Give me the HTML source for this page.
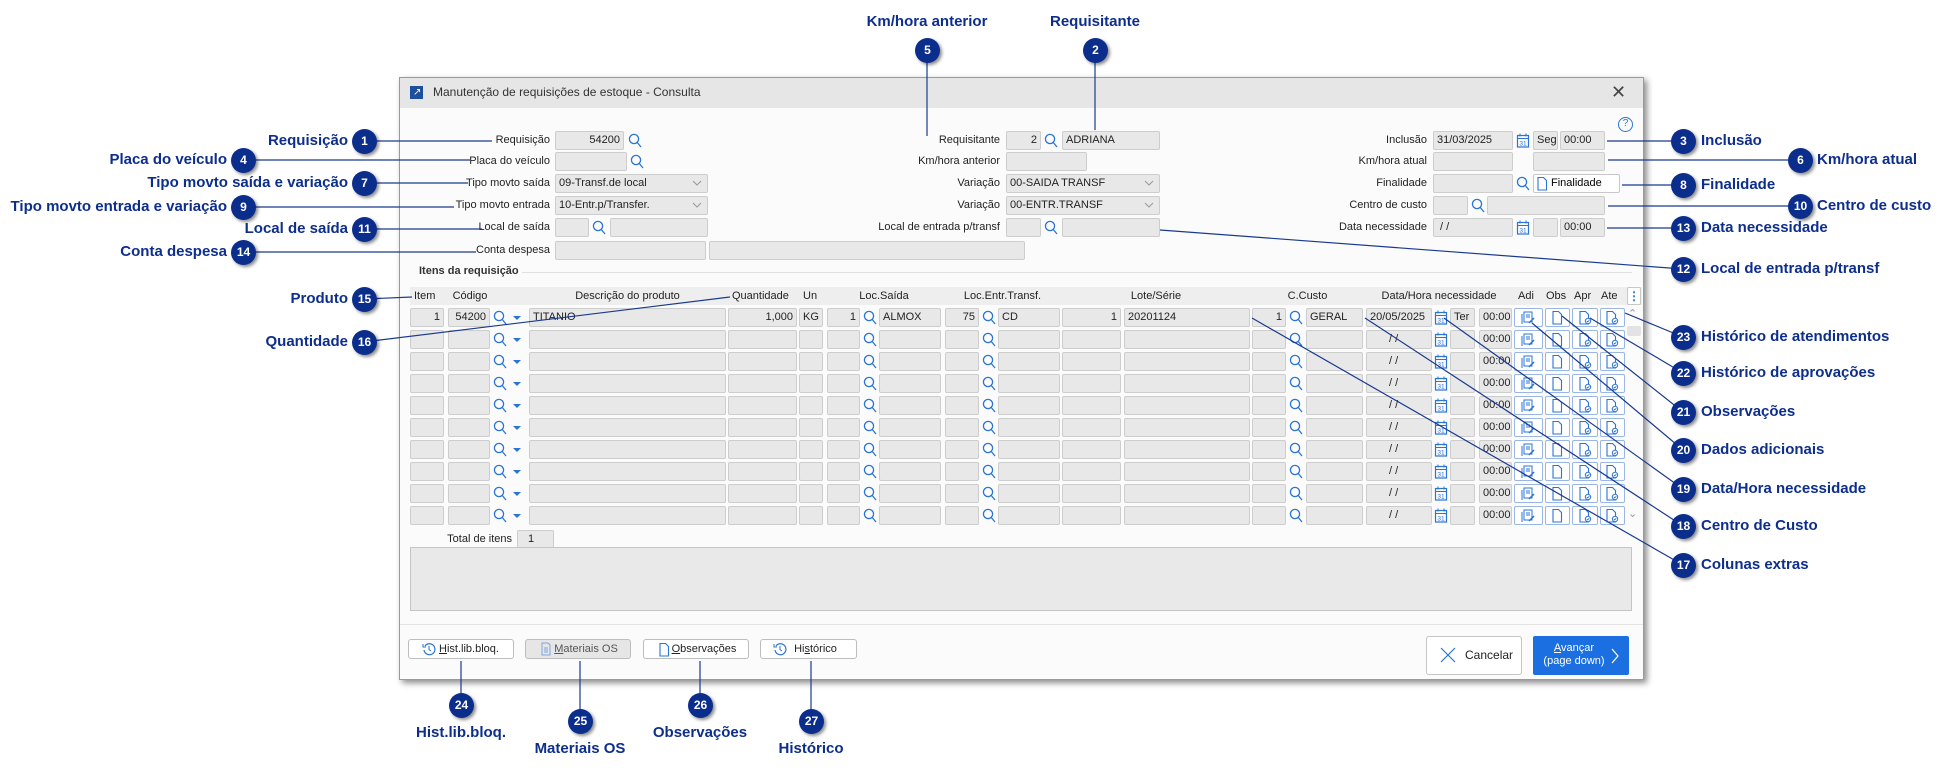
<!DOCTYPE html>
<html><head><meta charset="utf-8">
<style>
*{box-sizing:border-box}
body{margin:0;width:1945px;height:772px;position:relative;background:#fff;font-family:"Liberation Sans",sans-serif;overflow:hidden}
.a{position:absolute}
.win{left:399px;top:77px;width:1245px;height:603px;background:#fbfbfb;border:1px solid #9a9a9a;box-shadow:3px 3px 6px rgba(0,0,0,.45)}
.tb{left:400px;top:78px;width:1243px;height:30px;background:#e6e6e6}
.f{position:absolute;height:19px;background:#e8e8e8;border:1px solid #cdcdcd;border-radius:2px;font-size:11px;line-height:17px;padding:0 3px;color:#222;white-space:nowrap;overflow:hidden}
.r{text-align:right}
.lb{position:absolute;font-size:11px;color:#222;text-align:right;white-space:nowrap;line-height:19px}
.hd{position:absolute;top:288px;font-size:11px;color:#222;line-height:16px;white-space:nowrap}
.row{position:absolute;left:0;width:1945px;height:19px}
.row .f{top:0}
.ic{position:absolute;top:2px;width:14px;height:15px}
.bt{position:absolute;height:19px;background:#fff;border:1px solid #9ab6e4;border-radius:2px}
.bd{position:absolute;width:25px;height:25px;margin:-12px 0 0 -12px;border-radius:50%;background:#0b2d8c;color:#fff;font:bold 12px/25px "Liberation Sans",sans-serif;text-align:center;box-shadow:2px 2px 3px rgba(0,0,0,.45)}
.bl{position:absolute;font:bold 15px/18px "Liberation Sans",sans-serif;color:#0d2e8c;white-space:nowrap}
.btn{position:absolute;top:639px;height:20px;background:#fff;border:1px solid #bdbdbd;border-radius:3px;font-size:11px;line-height:18px;text-align:center;color:#222}
</style></head><body>
<svg width="0" height="0" style="position:absolute"><defs>
<symbol id="lp" viewBox="0 0 14 15"><circle cx="6" cy="6" r="4.6" fill="none" stroke="#2a74d8" stroke-width="1.3"/><line x1="9.3" y1="9.5" x2="13" y2="14" stroke="#2a74d8" stroke-width="1.3"/></symbol>
<symbol id="cl" viewBox="0 0 14 15"><rect x="1.5" y="2.5" width="11" height="11.5" fill="none" stroke="#2a74d8" stroke-width="1.2"/><line x1="1.5" y1="5.5" x2="12.5" y2="5.5" stroke="#2a74d8"/><line x1="4" y1="0.5" x2="4" y2="3.5" stroke="#2a74d8"/><line x1="10" y1="0.5" x2="10" y2="3.5" stroke="#2a74d8"/><text x="7" y="12.6" font-size="6.5" font-family="Liberation Sans" text-anchor="middle" fill="#2a74d8">31</text></symbol>
<symbol id="dc" viewBox="0 0 14 15"><path d="M3 1.5h5.5l3 3v9.5h-8.5z" fill="none" stroke="#2a74d8" stroke-width="1.1"/></symbol>
<symbol id="dk" viewBox="0 0 14 15"><path d="M2 1.5h5.5l3 3v9.5h-8.5z" fill="none" stroke="#2a74d8" stroke-width="1.1"/><circle cx="10" cy="11" r="2.7" fill="#fff" stroke="#2a74d8"/><path d="M8.8 11l0.9 0.9 1.6-1.6" fill="none" stroke="#2a74d8" stroke-width=".9"/></symbol>
<symbol id="ad" viewBox="0 0 14 15"><rect x="3" y="2" width="8" height="10" fill="none" stroke="#2a74d8"/><line x1="1" y1="4" x2="1" y2="14" stroke="#2a74d8"/><line x1="5" y1="5" x2="9" y2="5" stroke="#2a74d8"/><line x1="5" y1="7" x2="9" y2="7" stroke="#2a74d8"/><path d="M8 13l5-5" stroke="#2a74d8" stroke-width="1.5"/></symbol>
<symbol id="ar" viewBox="0 0 14 15"><path d="M3 6h8l-4 4z" fill="#2a74d8"/></symbol>
<symbol id="cb" viewBox="0 0 14 15"><path d="M3 5l4 4 4-4" fill="none" stroke="#999" stroke-width="1"/></symbol>
</defs></svg>

<div class="a win"></div>
<div class="a tb"></div>
<div class="a" style="left:410px;top:86px;width:13px;height:13px;background:#1d4f9e"></div>
<div class="a" style="left:413px;top:88px;color:#fff;font-size:10px;line-height:10px">&#8599;</div>
<div class="a" style="left:433px;top:85px;font-size:12px;color:#333">Manutenção de requisições de estoque - Consulta</div>
<div class="a" style="left:1611px;top:82px;font-size:18px;color:#444">&#x2715;</div>
<div class="a" style="left:1618px;top:117px;width:15px;height:15px;border:1.3px solid #2a74d8;border-radius:50%;color:#2a74d8;font-size:10px;line-height:12px;text-align:center">?</div>

<!-- left column -->
<div class="lb" style="left:400px;width:150px;top:131px">Requisição</div>
<div class="f r" style="left:555px;top:131px;width:69px">54200</div><svg class="ic" style="left:628px;top:133px"><use href="#lp"/></svg>
<div class="lb" style="left:400px;width:150px;top:152px">Placa do veículo</div>
<div class="f" style="left:555px;top:152px;width:72px"></div><svg class="ic" style="left:630px;top:154px"><use href="#lp"/></svg>
<div class="lb" style="left:400px;width:150px;top:174px">Tipo movto saída</div>
<div class="f" style="left:555px;top:174px;width:153px">09-Transf.de local</div><svg class="ic" style="left:690px;top:176px"><use href="#cb"/></svg>
<div class="lb" style="left:400px;width:150px;top:196px">Tipo movto entrada</div>
<div class="f" style="left:555px;top:196px;width:153px">10-Entr.p/Transfer.</div><svg class="ic" style="left:690px;top:198px"><use href="#cb"/></svg>
<div class="lb" style="left:400px;width:150px;top:218px">Local de saída</div>
<div class="f" style="left:555px;top:218px;width:34px"></div><svg class="ic" style="left:592px;top:220px"><use href="#lp"/></svg><div class="f" style="left:610px;top:218px;width:98px"></div>
<div class="lb" style="left:400px;width:150px;top:241px">Conta despesa</div>
<div class="f" style="left:555px;top:241px;width:151px"></div><div class="f" style="left:709px;top:241px;width:316px"></div>

<!-- middle column -->
<div class="lb" style="left:850px;width:150px;top:131px">Requisitante</div>
<div class="f r" style="left:1006px;top:131px;width:35px">2</div><svg class="ic" style="left:1044px;top:133px"><use href="#lp"/></svg><div class="f" style="left:1062px;top:131px;width:98px">ADRIANA</div>
<div class="lb" style="left:850px;width:150px;top:152px">Km/hora anterior</div>
<div class="f" style="left:1006px;top:152px;width:81px"></div>
<div class="lb" style="left:850px;width:150px;top:174px">Variação</div>
<div class="f" style="left:1006px;top:174px;width:154px">00-SAIDA TRANSF</div><svg class="ic" style="left:1142px;top:176px"><use href="#cb"/></svg>
<div class="lb" style="left:850px;width:150px;top:196px">Variação</div>
<div class="f" style="left:1006px;top:196px;width:154px">00-ENTR.TRANSF</div><svg class="ic" style="left:1142px;top:198px"><use href="#cb"/></svg>
<div class="lb" style="left:850px;width:150px;top:218px">Local de entrada p/transf</div>
<div class="f" style="left:1006px;top:218px;width:35px"></div><svg class="ic" style="left:1044px;top:220px"><use href="#lp"/></svg><div class="f" style="left:1062px;top:218px;width:98px"></div>

<!-- right column -->
<div class="lb" style="left:1277px;width:150px;top:131px">Inclusão</div>
<div class="f" style="left:1433px;top:131px;width:80px">31/03/2025</div><svg class="ic" style="left:1516px;top:133px"><use href="#cl"/></svg><div class="f" style="left:1533px;top:131px;width:25px">Seg</div><div class="f" style="left:1560px;top:131px;width:45px">00:00</div>
<div class="lb" style="left:1277px;width:150px;top:152px">Km/hora atual</div>
<div class="f" style="left:1433px;top:152px;width:80px"></div><div class="f" style="left:1533px;top:152px;width:72px"></div>
<div class="lb" style="left:1277px;width:150px;top:174px">Finalidade</div>
<div class="f" style="left:1433px;top:174px;width:80px"></div><svg class="ic" style="left:1516px;top:176px"><use href="#lp"/></svg>
<div class="a" style="left:1533px;top:174px;width:87px;height:19px;background:#fff;border:1px solid #c8c8c8;border-radius:2px;font-size:11px;line-height:17px;padding-left:17px">Finalidade</div><svg class="ic" style="left:1535px;top:176px"><use href="#dc"/></svg>
<div class="lb" style="left:1277px;width:150px;top:196px">Centro de custo</div>
<div class="f" style="left:1433px;top:196px;width:35px"></div><svg class="ic" style="left:1471px;top:198px"><use href="#lp"/></svg><div class="f" style="left:1487px;top:196px;width:118px"></div>
<div class="lb" style="left:1277px;width:150px;top:218px">Data necessidade</div>
<div class="f" style="left:1433px;top:218px;width:80px">&nbsp;/ /</div><svg class="ic" style="left:1516px;top:220px"><use href="#cl"/></svg><div class="f" style="left:1533px;top:218px;width:25px"></div><div class="f" style="left:1560px;top:218px;width:45px">00:00</div>

<!-- items -->
<div class="a" style="left:419px;top:265px;font-size:11px;font-weight:bold;color:#333">Itens da requisição</div>
<div class="a" style="left:522px;top:272px;width:1110px;height:1px;background:#e0e0e0"></div>
<div class="a" style="left:410px;top:287px;width:1232px;height:18px;background:#eeeeee"></div>
<div class="hd" style="left:414px">Item</div>
<div class="hd" style="left:452px;width:36px;text-align:center">Código</div>
<div class="hd" style="left:529px;width:197px;text-align:center">Descrição do produto</div>
<div class="hd" style="left:732px">Quantidade</div>
<div class="hd" style="left:803px">Un</div>
<div class="hd" style="left:827px;width:114px;text-align:center">Loc.Saída</div>
<div class="hd" style="left:945px;width:115px;text-align:center">Loc.Entr.Transf.</div>
<div class="hd" style="left:1062px;width:188px;text-align:center">Lote/Série</div>
<div class="hd" style="left:1252px;width:111px;text-align:center">C.Custo</div>
<div class="hd" style="left:1366px;width:146px;text-align:center">Data/Hora necessidade</div>
<div class="hd" style="left:1518px">Adi</div>
<div class="hd" style="left:1546px">Obs</div>
<div class="hd" style="left:1574px">Apr</div>
<div class="hd" style="left:1601px">Ate</div>
<div class="a" style="left:1627px;top:287px;width:14px;height:18px;background:#fff;border:1px solid #c8c8c8;border-radius:2px;color:#2a74d8;font-size:12px;font-weight:bold;text-align:center;line-height:16px">&#8942;</div>
<div class="a" style="left:1628px;top:307px;font-size:11px;color:#999">&#8963;</div>
<div class="a" style="left:1627px;top:326px;width:14px;height:10px;background:#e3e3e3;border-radius:2px"></div>
<div class="a" style="left:1628px;top:507px;font-size:11px;color:#999">&#8964;</div>

<div class="row" style="top:308px">
<div class="f r" style="left:410px;width:34px">1</div><div class="f r" style="left:448px;width:42px">54200</div><svg class="ic" style="left:493px"><use href="#lp"/></svg><svg class="ic" style="left:510px"><use href="#ar"/></svg>
<div class="f" style="left:529px;width:197px">TITANIO</div><div class="f r" style="left:728px;width:69px">1,000</div><div class="f" style="left:799px;width:24px">KG</div>
<div class="f r" style="left:827px;width:33px">1</div><svg class="ic" style="left:863px"><use href="#lp"/></svg><div class="f" style="left:879px;width:62px">ALMOX</div>
<div class="f r" style="left:945px;width:34px">75</div><svg class="ic" style="left:982px"><use href="#lp"/></svg><div class="f" style="left:998px;width:62px">CD</div>
<div class="f r" style="left:1062px;width:59px">1</div><div class="f" style="left:1124px;width:126px">20201124</div>
<div class="f r" style="left:1252px;width:34px">1</div><svg class="ic" style="left:1289px"><use href="#lp"/></svg><div class="f" style="left:1306px;width:57px">GERAL</div>
<div class="f" style="left:1366px;width:66px">20/05/2025</div><svg class="ic" style="left:1434px"><use href="#cl"/></svg><div class="f" style="left:1450px;width:25px">Ter</div><div class="f" style="left:1479px;width:33px">00:00</div>
<div class="bt" style="left:1514px;width:29px"></div><svg class="ic" style="left:1521px"><use href="#ad"/></svg>
<div class="bt" style="left:1545px;width:25px"></div><svg class="ic" style="left:1550px"><use href="#dc"/></svg>
<div class="bt" style="left:1572px;width:26px"></div><svg class="ic" style="left:1578px"><use href="#dk"/></svg>
<div class="bt" style="left:1600px;width:25px"></div><svg class="ic" style="left:1605px"><use href="#dk"/></svg>
</div>

<div class="row" style="top:330px"><div class="f" style="left:410px;width:34px"></div><div class="f" style="left:448px;width:42px"></div><svg class="ic" style="left:493px"><use href="#lp"/></svg><svg class="ic" style="left:510px"><use href="#ar"/></svg><div class="f" style="left:529px;width:197px"></div><div class="f" style="left:728px;width:69px"></div><div class="f" style="left:799px;width:24px"></div><div class="f" style="left:827px;width:33px"></div><svg class="ic" style="left:863px"><use href="#lp"/></svg><div class="f" style="left:879px;width:62px"></div><div class="f" style="left:945px;width:34px"></div><svg class="ic" style="left:982px"><use href="#lp"/></svg><div class="f" style="left:998px;width:62px"></div><div class="f" style="left:1062px;width:59px"></div><div class="f" style="left:1124px;width:126px"></div><div class="f" style="left:1252px;width:34px"></div><svg class="ic" style="left:1289px"><use href="#lp"/></svg><div class="f" style="left:1306px;width:57px"></div><div class="f" style="left:1366px;width:66px;padding-left:22px">/ /</div><svg class="ic" style="left:1434px"><use href="#cl"/></svg><div class="f" style="left:1450px;width:25px"></div><div class="f" style="left:1479px;width:33px">00:00</div><div class="bt" style="left:1514px;width:29px"></div><svg class="ic" style="left:1521px"><use href="#ad"/></svg><div class="bt" style="left:1545px;width:25px"></div><svg class="ic" style="left:1550px"><use href="#dc"/></svg><div class="bt" style="left:1572px;width:26px"></div><svg class="ic" style="left:1578px"><use href="#dk"/></svg><div class="bt" style="left:1600px;width:25px"></div><svg class="ic" style="left:1605px"><use href="#dk"/></svg></div>
<div class="row" style="top:352px"><div class="f" style="left:410px;width:34px"></div><div class="f" style="left:448px;width:42px"></div><svg class="ic" style="left:493px"><use href="#lp"/></svg><svg class="ic" style="left:510px"><use href="#ar"/></svg><div class="f" style="left:529px;width:197px"></div><div class="f" style="left:728px;width:69px"></div><div class="f" style="left:799px;width:24px"></div><div class="f" style="left:827px;width:33px"></div><svg class="ic" style="left:863px"><use href="#lp"/></svg><div class="f" style="left:879px;width:62px"></div><div class="f" style="left:945px;width:34px"></div><svg class="ic" style="left:982px"><use href="#lp"/></svg><div class="f" style="left:998px;width:62px"></div><div class="f" style="left:1062px;width:59px"></div><div class="f" style="left:1124px;width:126px"></div><div class="f" style="left:1252px;width:34px"></div><svg class="ic" style="left:1289px"><use href="#lp"/></svg><div class="f" style="left:1306px;width:57px"></div><div class="f" style="left:1366px;width:66px;padding-left:22px">/ /</div><svg class="ic" style="left:1434px"><use href="#cl"/></svg><div class="f" style="left:1450px;width:25px"></div><div class="f" style="left:1479px;width:33px">00:00</div><div class="bt" style="left:1514px;width:29px"></div><svg class="ic" style="left:1521px"><use href="#ad"/></svg><div class="bt" style="left:1545px;width:25px"></div><svg class="ic" style="left:1550px"><use href="#dc"/></svg><div class="bt" style="left:1572px;width:26px"></div><svg class="ic" style="left:1578px"><use href="#dk"/></svg><div class="bt" style="left:1600px;width:25px"></div><svg class="ic" style="left:1605px"><use href="#dk"/></svg></div>
<div class="row" style="top:374px"><div class="f" style="left:410px;width:34px"></div><div class="f" style="left:448px;width:42px"></div><svg class="ic" style="left:493px"><use href="#lp"/></svg><svg class="ic" style="left:510px"><use href="#ar"/></svg><div class="f" style="left:529px;width:197px"></div><div class="f" style="left:728px;width:69px"></div><div class="f" style="left:799px;width:24px"></div><div class="f" style="left:827px;width:33px"></div><svg class="ic" style="left:863px"><use href="#lp"/></svg><div class="f" style="left:879px;width:62px"></div><div class="f" style="left:945px;width:34px"></div><svg class="ic" style="left:982px"><use href="#lp"/></svg><div class="f" style="left:998px;width:62px"></div><div class="f" style="left:1062px;width:59px"></div><div class="f" style="left:1124px;width:126px"></div><div class="f" style="left:1252px;width:34px"></div><svg class="ic" style="left:1289px"><use href="#lp"/></svg><div class="f" style="left:1306px;width:57px"></div><div class="f" style="left:1366px;width:66px;padding-left:22px">/ /</div><svg class="ic" style="left:1434px"><use href="#cl"/></svg><div class="f" style="left:1450px;width:25px"></div><div class="f" style="left:1479px;width:33px">00:00</div><div class="bt" style="left:1514px;width:29px"></div><svg class="ic" style="left:1521px"><use href="#ad"/></svg><div class="bt" style="left:1545px;width:25px"></div><svg class="ic" style="left:1550px"><use href="#dc"/></svg><div class="bt" style="left:1572px;width:26px"></div><svg class="ic" style="left:1578px"><use href="#dk"/></svg><div class="bt" style="left:1600px;width:25px"></div><svg class="ic" style="left:1605px"><use href="#dk"/></svg></div>
<div class="row" style="top:396px"><div class="f" style="left:410px;width:34px"></div><div class="f" style="left:448px;width:42px"></div><svg class="ic" style="left:493px"><use href="#lp"/></svg><svg class="ic" style="left:510px"><use href="#ar"/></svg><div class="f" style="left:529px;width:197px"></div><div class="f" style="left:728px;width:69px"></div><div class="f" style="left:799px;width:24px"></div><div class="f" style="left:827px;width:33px"></div><svg class="ic" style="left:863px"><use href="#lp"/></svg><div class="f" style="left:879px;width:62px"></div><div class="f" style="left:945px;width:34px"></div><svg class="ic" style="left:982px"><use href="#lp"/></svg><div class="f" style="left:998px;width:62px"></div><div class="f" style="left:1062px;width:59px"></div><div class="f" style="left:1124px;width:126px"></div><div class="f" style="left:1252px;width:34px"></div><svg class="ic" style="left:1289px"><use href="#lp"/></svg><div class="f" style="left:1306px;width:57px"></div><div class="f" style="left:1366px;width:66px;padding-left:22px">/ /</div><svg class="ic" style="left:1434px"><use href="#cl"/></svg><div class="f" style="left:1450px;width:25px"></div><div class="f" style="left:1479px;width:33px">00:00</div><div class="bt" style="left:1514px;width:29px"></div><svg class="ic" style="left:1521px"><use href="#ad"/></svg><div class="bt" style="left:1545px;width:25px"></div><svg class="ic" style="left:1550px"><use href="#dc"/></svg><div class="bt" style="left:1572px;width:26px"></div><svg class="ic" style="left:1578px"><use href="#dk"/></svg><div class="bt" style="left:1600px;width:25px"></div><svg class="ic" style="left:1605px"><use href="#dk"/></svg></div>
<div class="row" style="top:418px"><div class="f" style="left:410px;width:34px"></div><div class="f" style="left:448px;width:42px"></div><svg class="ic" style="left:493px"><use href="#lp"/></svg><svg class="ic" style="left:510px"><use href="#ar"/></svg><div class="f" style="left:529px;width:197px"></div><div class="f" style="left:728px;width:69px"></div><div class="f" style="left:799px;width:24px"></div><div class="f" style="left:827px;width:33px"></div><svg class="ic" style="left:863px"><use href="#lp"/></svg><div class="f" style="left:879px;width:62px"></div><div class="f" style="left:945px;width:34px"></div><svg class="ic" style="left:982px"><use href="#lp"/></svg><div class="f" style="left:998px;width:62px"></div><div class="f" style="left:1062px;width:59px"></div><div class="f" style="left:1124px;width:126px"></div><div class="f" style="left:1252px;width:34px"></div><svg class="ic" style="left:1289px"><use href="#lp"/></svg><div class="f" style="left:1306px;width:57px"></div><div class="f" style="left:1366px;width:66px;padding-left:22px">/ /</div><svg class="ic" style="left:1434px"><use href="#cl"/></svg><div class="f" style="left:1450px;width:25px"></div><div class="f" style="left:1479px;width:33px">00:00</div><div class="bt" style="left:1514px;width:29px"></div><svg class="ic" style="left:1521px"><use href="#ad"/></svg><div class="bt" style="left:1545px;width:25px"></div><svg class="ic" style="left:1550px"><use href="#dc"/></svg><div class="bt" style="left:1572px;width:26px"></div><svg class="ic" style="left:1578px"><use href="#dk"/></svg><div class="bt" style="left:1600px;width:25px"></div><svg class="ic" style="left:1605px"><use href="#dk"/></svg></div>
<div class="row" style="top:440px"><div class="f" style="left:410px;width:34px"></div><div class="f" style="left:448px;width:42px"></div><svg class="ic" style="left:493px"><use href="#lp"/></svg><svg class="ic" style="left:510px"><use href="#ar"/></svg><div class="f" style="left:529px;width:197px"></div><div class="f" style="left:728px;width:69px"></div><div class="f" style="left:799px;width:24px"></div><div class="f" style="left:827px;width:33px"></div><svg class="ic" style="left:863px"><use href="#lp"/></svg><div class="f" style="left:879px;width:62px"></div><div class="f" style="left:945px;width:34px"></div><svg class="ic" style="left:982px"><use href="#lp"/></svg><div class="f" style="left:998px;width:62px"></div><div class="f" style="left:1062px;width:59px"></div><div class="f" style="left:1124px;width:126px"></div><div class="f" style="left:1252px;width:34px"></div><svg class="ic" style="left:1289px"><use href="#lp"/></svg><div class="f" style="left:1306px;width:57px"></div><div class="f" style="left:1366px;width:66px;padding-left:22px">/ /</div><svg class="ic" style="left:1434px"><use href="#cl"/></svg><div class="f" style="left:1450px;width:25px"></div><div class="f" style="left:1479px;width:33px">00:00</div><div class="bt" style="left:1514px;width:29px"></div><svg class="ic" style="left:1521px"><use href="#ad"/></svg><div class="bt" style="left:1545px;width:25px"></div><svg class="ic" style="left:1550px"><use href="#dc"/></svg><div class="bt" style="left:1572px;width:26px"></div><svg class="ic" style="left:1578px"><use href="#dk"/></svg><div class="bt" style="left:1600px;width:25px"></div><svg class="ic" style="left:1605px"><use href="#dk"/></svg></div>
<div class="row" style="top:462px"><div class="f" style="left:410px;width:34px"></div><div class="f" style="left:448px;width:42px"></div><svg class="ic" style="left:493px"><use href="#lp"/></svg><svg class="ic" style="left:510px"><use href="#ar"/></svg><div class="f" style="left:529px;width:197px"></div><div class="f" style="left:728px;width:69px"></div><div class="f" style="left:799px;width:24px"></div><div class="f" style="left:827px;width:33px"></div><svg class="ic" style="left:863px"><use href="#lp"/></svg><div class="f" style="left:879px;width:62px"></div><div class="f" style="left:945px;width:34px"></div><svg class="ic" style="left:982px"><use href="#lp"/></svg><div class="f" style="left:998px;width:62px"></div><div class="f" style="left:1062px;width:59px"></div><div class="f" style="left:1124px;width:126px"></div><div class="f" style="left:1252px;width:34px"></div><svg class="ic" style="left:1289px"><use href="#lp"/></svg><div class="f" style="left:1306px;width:57px"></div><div class="f" style="left:1366px;width:66px;padding-left:22px">/ /</div><svg class="ic" style="left:1434px"><use href="#cl"/></svg><div class="f" style="left:1450px;width:25px"></div><div class="f" style="left:1479px;width:33px">00:00</div><div class="bt" style="left:1514px;width:29px"></div><svg class="ic" style="left:1521px"><use href="#ad"/></svg><div class="bt" style="left:1545px;width:25px"></div><svg class="ic" style="left:1550px"><use href="#dc"/></svg><div class="bt" style="left:1572px;width:26px"></div><svg class="ic" style="left:1578px"><use href="#dk"/></svg><div class="bt" style="left:1600px;width:25px"></div><svg class="ic" style="left:1605px"><use href="#dk"/></svg></div>
<div class="row" style="top:484px"><div class="f" style="left:410px;width:34px"></div><div class="f" style="left:448px;width:42px"></div><svg class="ic" style="left:493px"><use href="#lp"/></svg><svg class="ic" style="left:510px"><use href="#ar"/></svg><div class="f" style="left:529px;width:197px"></div><div class="f" style="left:728px;width:69px"></div><div class="f" style="left:799px;width:24px"></div><div class="f" style="left:827px;width:33px"></div><svg class="ic" style="left:863px"><use href="#lp"/></svg><div class="f" style="left:879px;width:62px"></div><div class="f" style="left:945px;width:34px"></div><svg class="ic" style="left:982px"><use href="#lp"/></svg><div class="f" style="left:998px;width:62px"></div><div class="f" style="left:1062px;width:59px"></div><div class="f" style="left:1124px;width:126px"></div><div class="f" style="left:1252px;width:34px"></div><svg class="ic" style="left:1289px"><use href="#lp"/></svg><div class="f" style="left:1306px;width:57px"></div><div class="f" style="left:1366px;width:66px;padding-left:22px">/ /</div><svg class="ic" style="left:1434px"><use href="#cl"/></svg><div class="f" style="left:1450px;width:25px"></div><div class="f" style="left:1479px;width:33px">00:00</div><div class="bt" style="left:1514px;width:29px"></div><svg class="ic" style="left:1521px"><use href="#ad"/></svg><div class="bt" style="left:1545px;width:25px"></div><svg class="ic" style="left:1550px"><use href="#dc"/></svg><div class="bt" style="left:1572px;width:26px"></div><svg class="ic" style="left:1578px"><use href="#dk"/></svg><div class="bt" style="left:1600px;width:25px"></div><svg class="ic" style="left:1605px"><use href="#dk"/></svg></div>
<div class="row" style="top:506px"><div class="f" style="left:410px;width:34px"></div><div class="f" style="left:448px;width:42px"></div><svg class="ic" style="left:493px"><use href="#lp"/></svg><svg class="ic" style="left:510px"><use href="#ar"/></svg><div class="f" style="left:529px;width:197px"></div><div class="f" style="left:728px;width:69px"></div><div class="f" style="left:799px;width:24px"></div><div class="f" style="left:827px;width:33px"></div><svg class="ic" style="left:863px"><use href="#lp"/></svg><div class="f" style="left:879px;width:62px"></div><div class="f" style="left:945px;width:34px"></div><svg class="ic" style="left:982px"><use href="#lp"/></svg><div class="f" style="left:998px;width:62px"></div><div class="f" style="left:1062px;width:59px"></div><div class="f" style="left:1124px;width:126px"></div><div class="f" style="left:1252px;width:34px"></div><svg class="ic" style="left:1289px"><use href="#lp"/></svg><div class="f" style="left:1306px;width:57px"></div><div class="f" style="left:1366px;width:66px;padding-left:22px">/ /</div><svg class="ic" style="left:1434px"><use href="#cl"/></svg><div class="f" style="left:1450px;width:25px"></div><div class="f" style="left:1479px;width:33px">00:00</div><div class="bt" style="left:1514px;width:29px"></div><svg class="ic" style="left:1521px"><use href="#ad"/></svg><div class="bt" style="left:1545px;width:25px"></div><svg class="ic" style="left:1550px"><use href="#dc"/></svg><div class="bt" style="left:1572px;width:26px"></div><svg class="ic" style="left:1578px"><use href="#dk"/></svg><div class="bt" style="left:1600px;width:25px"></div><svg class="ic" style="left:1605px"><use href="#dk"/></svg></div>

<div class="lb" style="left:430px;width:82px;top:530px">Total de itens</div>
<div class="f" style="left:517px;top:530px;width:37px;padding-left:10px">1</div>
<div class="a" style="left:410px;top:547px;width:1222px;height:64px;background:#e9e9e9;border:1px solid #c5c5c5"></div>
<div class="a" style="left:400px;top:624px;width:1243px;height:1px;background:#e4e4e4"></div>

<div class="btn" style="left:408px;width:106px"><svg style="position:absolute;left:13px;top:2px" width="14" height="14" viewBox="0 0 14 14"><path d="M3 4A5.5 5.5 0 1 1 2 8" fill="none" stroke="#2a74d8" stroke-width="1.2"/><path d="M1 2v3h3" fill="none" stroke="#2a74d8"/><path d="M7 4v3.5l2 1.5" fill="none" stroke="#2a74d8"/></svg><span style="padding-left:16px"><u>H</u>ist.lib.bloq.</span></div>
<div class="btn" style="left:525px;width:106px;background:#e6e6e6"><svg style="position:absolute;left:13px;top:2px" width="14" height="14" viewBox="0 0 14 14"><path d="M3 1h6l2 2v10H3z" fill="none" stroke="#7aa6e0"/><path d="M5 6h4M5 8h4M5 10h4" stroke="#7aa6e0"/></svg><span style="padding-left:16px;color:#555"><u>M</u>ateriais OS</span></div>
<div class="btn" style="left:643px;width:106px"><svg style="position:absolute;left:13px;top:2px" width="14" height="15"><use href="#dc"/></svg><span style="padding-left:16px"><u>O</u>bservações</span></div>
<div class="btn" style="left:760px;width:97px"><svg style="position:absolute;left:12px;top:2px" width="14" height="14" viewBox="0 0 14 14"><path d="M3 4A5.5 5.5 0 1 1 2 8" fill="none" stroke="#2a74d8" stroke-width="1.2"/><path d="M1 2v3h3" fill="none" stroke="#2a74d8"/><path d="M7 4v3.5l2 1.5" fill="none" stroke="#2a74d8"/></svg><span style="padding-left:14px">Hi<u>s</u>tórico</span></div>

<div class="a" style="left:1426px;top:636px;width:96px;height:39px;background:#fff;border:1px solid #c5c5c5;border-radius:3px;font-size:12px;line-height:37px;padding-left:38px;color:#222">Cancelar</div>
<svg class="a" style="left:1440px;top:647px" width="16" height="16"><path d="M1 1l14 14M15 1L1 15" stroke="#2a74d8" stroke-width="1.2"/></svg>
<div class="a" style="left:1533px;top:636px;width:96px;height:39px;background:#1c6fe0;border-radius:2px;color:#fff;font-size:11px;line-height:13px;padding:6px 0 0 7px;text-align:center;width:96px"><div style="width:68px"><u>A</u>vançar<br>(page down)</div></div>
<svg class="a" style="left:1610px;top:648px" width="10" height="16"><path d="M2 1l6 7-6 7" fill="none" stroke="#fff" stroke-width="1.2"/></svg>

<!-- callout lines -->
<svg class="a" style="left:0;top:0" width="1945" height="772"><g stroke="#1a3a8f" stroke-width="1.2" fill="none">
<line x1="364" y1="141" x2="492" y2="141"/><line x1="243" y1="160" x2="470" y2="160"/><line x1="364" y1="183" x2="468" y2="183"/><line x1="243" y1="207" x2="454" y2="207"/><line x1="364" y1="229" x2="482" y2="229"/><line x1="243" y1="252" x2="476" y2="252"/><line x1="364" y1="299" x2="412" y2="297"/><line x1="364" y1="342" x2="730" y2="297"/>
<line x1="927" y1="50" x2="927" y2="136"/><line x1="1095" y1="50" x2="1095" y2="130"/>
<line x1="1683" y1="141" x2="1607" y2="141"/><line x1="1800" y1="160" x2="1608" y2="160"/><line x1="1683" y1="185" x2="1622" y2="185"/><line x1="1800" y1="206" x2="1608" y2="206"/><line x1="1683" y1="228" x2="1607" y2="228"/>
<line x1="1683" y1="269" x2="1160" y2="230"/>
<line x1="1683" y1="337" x2="1625" y2="313"/><line x1="1683" y1="373" x2="1590" y2="318"/><line x1="1683" y1="412" x2="1562" y2="316"/><line x1="1683" y1="450" x2="1532" y2="323"/><line x1="1683" y1="489" x2="1444" y2="318"/><line x1="1683" y1="526" x2="1365" y2="318"/><line x1="1683" y1="565" x2="1252" y2="318"/>
<line x1="461" y1="661" x2="461" y2="705"/><line x1="580" y1="661" x2="580" y2="721"/><line x1="700" y1="661" x2="700" y2="705"/><line x1="811" y1="661" x2="811" y2="721"/>
</g></svg>

<!-- badges -->
<div class="bd" style="left:364px;top:141px">1</div><div class="bl" style="right:1597px;top:132px">Requisição</div>
<div class="bd" style="left:243px;top:160px">4</div><div class="bl" style="right:1718px;top:151px">Placa do veículo</div>
<div class="bd" style="left:364px;top:183px">7</div><div class="bl" style="right:1597px;top:174px">Tipo movto saída e variação</div>
<div class="bd" style="left:243px;top:207px">9</div><div class="bl" style="right:1718px;top:198px">Tipo movto entrada e variação</div>
<div class="bd" style="left:364px;top:229px">11</div><div class="bl" style="right:1597px;top:220px">Local de saída</div>
<div class="bd" style="left:243px;top:252px">14</div><div class="bl" style="right:1718px;top:243px">Conta despesa</div>
<div class="bd" style="left:364px;top:299px">15</div><div class="bl" style="right:1597px;top:290px">Produto</div>
<div class="bd" style="left:364px;top:342px">16</div><div class="bl" style="right:1597px;top:333px">Quantidade</div>
<div class="bd" style="left:927px;top:50px">5</div><div class="bl" style="left:827px;width:200px;text-align:center;top:13px">Km/hora anterior</div>
<div class="bd" style="left:1095px;top:50px">2</div><div class="bl" style="left:995px;width:200px;text-align:center;top:13px">Requisitante</div>
<div class="bd" style="left:1683px;top:141px">3</div><div class="bl" style="left:1701px;top:132px">Inclusão</div>
<div class="bd" style="left:1800px;top:160px">6</div><div class="bl" style="left:1817px;top:151px">Km/hora atual</div>
<div class="bd" style="left:1683px;top:185px">8</div><div class="bl" style="left:1701px;top:176px">Finalidade</div>
<div class="bd" style="left:1800px;top:206px">10</div><div class="bl" style="left:1817px;top:197px">Centro de custo</div>
<div class="bd" style="left:1683px;top:228px">13</div><div class="bl" style="left:1701px;top:219px">Data necessidade</div>
<div class="bd" style="left:1683px;top:269px">12</div><div class="bl" style="left:1701px;top:260px">Local de entrada p/transf</div>
<div class="bd" style="left:1683px;top:337px">23</div><div class="bl" style="left:1701px;top:328px">Histórico de atendimentos</div>
<div class="bd" style="left:1683px;top:373px">22</div><div class="bl" style="left:1701px;top:364px">Histórico de aprovações</div>
<div class="bd" style="left:1683px;top:412px">21</div><div class="bl" style="left:1701px;top:403px">Observações</div>
<div class="bd" style="left:1683px;top:450px">20</div><div class="bl" style="left:1701px;top:441px">Dados adicionais</div>
<div class="bd" style="left:1683px;top:489px">19</div><div class="bl" style="left:1701px;top:480px">Data/Hora necessidade</div>
<div class="bd" style="left:1683px;top:526px">18</div><div class="bl" style="left:1701px;top:517px">Centro de Custo</div>
<div class="bd" style="left:1683px;top:565px">17</div><div class="bl" style="left:1701px;top:556px">Colunas extras</div>
<div class="bd" style="left:461px;top:705px">24</div><div class="bl" style="left:381px;width:160px;text-align:center;top:724px">Hist.lib.bloq.</div>
<div class="bd" style="left:580px;top:721px">25</div><div class="bl" style="left:500px;width:160px;text-align:center;top:740px">Materiais OS</div>
<div class="bd" style="left:700px;top:705px">26</div><div class="bl" style="left:620px;width:160px;text-align:center;top:724px">Observações</div>
<div class="bd" style="left:811px;top:721px">27</div><div class="bl" style="left:731px;width:160px;text-align:center;top:740px">Histórico</div>
</body></html>
